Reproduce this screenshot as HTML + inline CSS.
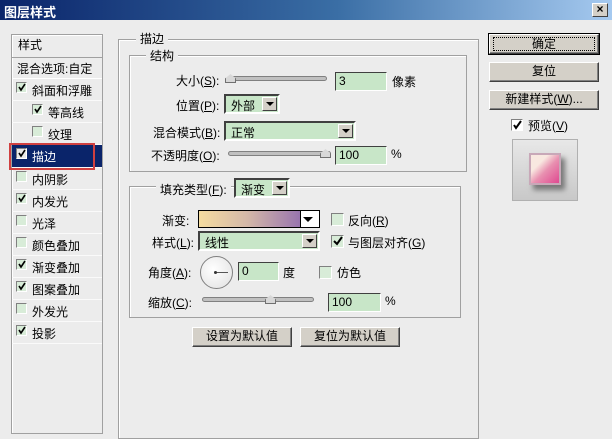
<!DOCTYPE html><html><head><meta charset="utf-8"><style>
*{box-sizing:border-box;margin:0;padding:0}
body{width:612px;height:425px;overflow:hidden;background:#ececec;font:12px "Liberation Sans","Noto Sans CJK SC",sans-serif;color:#000;position:relative}
.a{position:absolute;white-space:nowrap}
.title{left:0;top:0;width:612px;height:20px;background:linear-gradient(90deg,#0a246a,#3a6ea5 55%,#a6caf0);color:#fff;font-weight:bold;font-size:13px;padding:2px 4px}
.x{left:592px;top:3px;width:16px;height:14px;background:#d4d0c8;border:1px solid;border-color:#fff #404040 #404040 #fff;font-size:12px;line-height:11px;text-align:center;font-weight:bold}
.grp{position:absolute;border:1px solid #a0a0a0;box-shadow:inset 1px 1px #fff}
.lg{position:absolute;background:#ececec;padding:0 4px}
.cb{position:absolute;width:11px;height:11px;background:#d8ecd8;border:1px solid;border-color:#808080 #fff #fff #808080}
.cb svg{position:absolute;left:0;top:0}
.li{position:absolute;left:12px;width:90px;height:22px;border-bottom:1px solid #fafafa}
.li span{position:absolute;left:20px;top:3px}
.li .cb{left:4px;top:3px}
.inp{position:absolute;background:#c8e6c8;border:1px solid;border-color:#404040 #fff #fff #404040;padding:1px 3px;height:19px}
.dd{position:absolute;background:#c8e6c8;border:2px solid;border-color:#404040 #fff #fff #404040;padding:1px 5px;height:20px}
.dd i{position:absolute;right:1px;top:1px;width:15px;height:14px;background:#d4d0c8;border:1px solid;border-color:#fff #404040 #404040 #fff}
.dd i:after{content:"";position:absolute;left:3px;top:4px;border:4px solid transparent;border-top:4px solid #000}
.btn{position:absolute;background:#d4d0c8;border:1px solid;border-color:#fff #404040 #404040 #fff;box-shadow:inset -1px -1px #808080;text-align:center;line-height:17px}
.sl{position:absolute;height:5px;background:#c0c0c0;border:1px solid #808080;border-radius:3px}
.th{position:absolute;width:11px;height:9px;background:#d8d8d8;border:1px solid #707070;border-top:none;clip-path:polygon(50% 0,100% 50%,100% 100%,0 100%,0 50%)}
</style></head><body>
<div class="a title">图层样式</div><div class="a x">×</div>

<div class="grp" style="left:11px;top:34px;width:92px;height:400px;background:#ececec"></div>
<div class="a" style="left:18px;top:36px">样式</div>
<div class="a" style="left:12px;top:57px;width:90px;border-top:1px solid #a0a0a0"></div>
<div class="a" style="left:17px;top:60px">混合选项:自定</div>
<div class="a" style="left:12px;top:78px;width:90px;border-top:1px solid #fff"></div>
<div class="li" style="top:79px"><div class="cb"><svg width="10" height="10"><path d="M2 4l2 3 4-6" stroke="#000" stroke-width="1.6" fill="none"/></svg></div><span>斜面和浮雕</span></div>
<div class="li" style="top:101px"><div class="cb" style="left:20px"><svg width="10" height="10"><path d="M2 4l2 3 4-6" stroke="#000" stroke-width="1.6" fill="none"/></svg></div><span style="left:36px">等高线</span></div>
<div class="li" style="top:123px"><div class="cb" style="left:20px"></div><span style="left:36px">纹理</span></div>
<div class="li" style="top:145px;background:#0a246a;color:#fff;height:23px"><div class="cb" style="background:#e8e8e8"><svg width="10" height="10"><path d="M2 4l2 3 4-6" stroke="#000" stroke-width="1.6" fill="none"/></svg></div><span>描边</span></div>
<div class="a" style="left:9px;top:143px;width:86px;height:27px;border:2px solid #d04040"></div>
<div class="li" style="top:168px"><div class="cb"></div><span>内阴影</span></div>
<div class="li" style="top:190px"><div class="cb"><svg width="10" height="10"><path d="M2 4l2 3 4-6" stroke="#000" stroke-width="1.6" fill="none"/></svg></div><span>内发光</span></div>
<div class="li" style="top:212px"><div class="cb"></div><span>光泽</span></div>
<div class="li" style="top:234px"><div class="cb"></div><span>颜色叠加</span></div>
<div class="li" style="top:256px"><div class="cb"><svg width="10" height="10"><path d="M2 4l2 3 4-6" stroke="#000" stroke-width="1.6" fill="none"/></svg></div><span>渐变叠加</span></div>
<div class="li" style="top:278px"><div class="cb"><svg width="10" height="10"><path d="M2 4l2 3 4-6" stroke="#000" stroke-width="1.6" fill="none"/></svg></div><span>图案叠加</span></div>
<div class="li" style="top:300px"><div class="cb"></div><span>外发光</span></div>
<div class="li" style="top:322px"><div class="cb"><svg width="10" height="10"><path d="M2 4l2 3 4-6" stroke="#000" stroke-width="1.6" fill="none"/></svg></div><span>投影</span></div>

<div class="grp" style="left:118px;top:39px;width:361px;height:400px"></div>
<div class="lg" style="left:136px;top:30px">描边</div>
<div class="grp" style="left:129px;top:55px;width:338px;height:117px"></div>
<div class="lg" style="left:146px;top:47px">结构</div>
<div class="a" style="left:176px;top:72px">大小(<u>S</u>):</div>
<div class="sl" style="left:227px;top:76px;width:100px"></div><div class="th" style="left:225px;top:74px"></div>
<div class="inp" style="left:335px;top:72px;width:52px">3</div><div class="a" style="left:392px;top:73px">像素</div>
<div class="a" style="left:176px;top:97px">位置(<u>P</u>):</div>
<div class="dd" style="left:224px;top:94px;width:56px">外部<i></i></div>
<div class="a" style="left:153px;top:124px">混合模式(<u>B</u>):</div>
<div class="dd" style="left:224px;top:121px;width:132px">正常<i></i></div>
<div class="a" style="left:151px;top:147px">不透明度(<u>O</u>):</div>
<div class="sl" style="left:228px;top:151px;width:103px"></div><div class="th" style="left:320px;top:149px"></div>
<div class="inp" style="left:335px;top:146px;width:52px">100</div><div class="a" style="left:391px;top:147px">%</div>

<div class="grp" style="left:129px;top:186px;width:332px;height:132px"></div>
<div class="lg" style="left:156px;top:181px">填充类型(<u>F</u>):</div>
<div class="dd" style="left:234px;top:178px;width:56px;background:#c8e6c8">渐变<i></i></div>
<div class="a" style="left:162px;top:212px">渐变:</div>
<div class="a" style="left:198px;top:210px;width:122px;height:18px;border:1px solid #000;background:linear-gradient(90deg,#f5dca0,#d4b8a8 40%,#8a64b0 95%)"></div>
<div class="a" style="left:300px;top:210px;width:20px;height:18px;border:1px solid #000;background:#fff"></div>
<div class="a" style="left:303px;top:217px;border:5px solid transparent;border-top:5px solid #000"></div>
<div class="cb" style="left:331px;top:213px;width:13px;height:13px"></div><div class="a" style="left:348px;top:212px">反向(<u>R</u>)</div>
<div class="a" style="left:152px;top:234px">样式(<u>L</u>):</div>
<div class="dd" style="left:198px;top:231px;width:122px">线性<i></i></div>
<div class="cb" style="left:331px;top:235px;width:13px;height:13px"><svg width="12" height="12"><path d="M2 5l3 3 5-7" stroke="#000" stroke-width="2" fill="none"/></svg></div><div class="a" style="left:348px;top:234px">与图层对齐(<u>G</u>)</div>
<div class="a" style="left:148px;top:264px">角度(<u>A</u>):</div>
<div class="a" style="left:200px;top:256px;width:33px;height:33px;border:1px solid #808080;border-radius:50%;background:radial-gradient(circle at 40% 40%,#fff,#e0e0e0)"></div>
<div class="a" style="left:215px;top:272px;width:13px;height:1px;background:#555"></div>
<div class="a" style="left:214px;top:271px;width:3px;height:3px;background:#333;border-radius:50%"></div>
<div class="inp" style="left:238px;top:262px;width:41px">0</div><div class="a" style="left:283px;top:264px">度</div>
<div class="cb" style="left:319px;top:266px;width:13px;height:13px"></div><div class="a" style="left:337px;top:264px">仿色</div>
<div class="a" style="left:148px;top:294px">缩放(<u>C</u>):</div>
<div class="sl" style="left:202px;top:297px;width:112px"></div><div class="th" style="left:265px;top:295px"></div>
<div class="inp" style="left:328px;top:293px;width:53px">100</div><div class="a" style="left:385px;top:294px">%</div>
<div class="btn" style="left:192px;top:327px;width:100px;height:20px">设置为默认值</div>
<div class="btn" style="left:300px;top:327px;width:100px;height:20px">复位为默认值</div>

<div class="btn" style="left:489px;top:34px;width:110px;height:20px;outline:1px solid #000"><span style="border:1px dotted #000;display:block;margin:2px 3px;line-height:12px">确定</span></div>
<div class="btn" style="left:489px;top:62px;width:110px;height:20px">复位</div>
<div class="btn" style="left:489px;top:90px;width:110px;height:20px">新建样式(<u>W</u>)...</div>
<div class="cb" style="left:511px;top:119px;width:12px;height:12px;background:#fff"><svg width="11" height="11"><path d="M2 5l2 3 5-7" stroke="#000" stroke-width="2" fill="none"/></svg></div><div class="a" style="left:528px;top:117px">预览(<u>V</u>)</div>
<div class="a" style="left:512px;top:139px;width:66px;height:62px;border:1px solid #b0b0b0;background:linear-gradient(180deg,#e8e8e8,#c8c8c8)"></div>
<div class="a" style="left:529px;top:153px;width:32px;height:32px;background:linear-gradient(135deg,#f8e8e0 30%,#e890b0 55%,#e04890);border:2px solid #c8a8b8;box-shadow:4px 5px 5px #777"></div>
</body></html>
